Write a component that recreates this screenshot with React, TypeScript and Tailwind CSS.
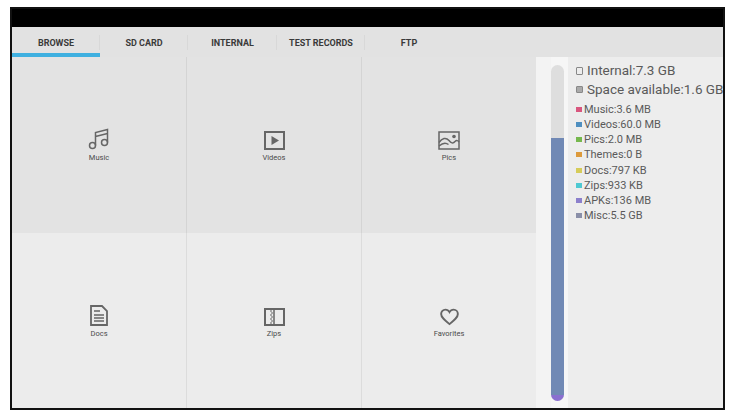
import React from "react";

const tabs = [
  { label: "BROWSE", w: "w-[88px]", active: true, sep: true },
  { label: "SD CARD", w: "w-[88px]", sep: true },
  { label: "INTERNAL", w: "w-[89px]", sep: true },
  { label: "TEST RECORDS", w: "w-[88px]", sep: true },
  { label: "FTP", w: "w-[88px]" },
];

const stroke = { fill: "none", stroke: "#666", strokeWidth: 1.5 };

const MusicIcon = () => (
  <svg width="22" height="22" viewBox="0 0 22 22" {...stroke}>
    <circle cx="4.5" cy="17.5" r="3" />
    <circle cx="16.5" cy="14.5" r="3" />
    <path d="M7.5 17.5V4.5L19.5 1.5V14.5M7.5 8.5L19.5 5.5" />
  </svg>
);
const VideoIcon = () => (
  <svg width="21" height="19" viewBox="0 0 21 19" {...stroke}>
    <rect x="1" y="1" width="19" height="17" strokeWidth="2" />
    <path d="M7.5 5L15 9.5L7.5 14Z" fill="#666" stroke="none" />
  </svg>
);
const PicIcon = () => (
  <svg width="22" height="19" viewBox="0 0 22 19" {...stroke}>
    <rect x="1" y="1" width="20" height="17" />
    <circle cx="16" cy="5.5" r="1.8" fill="#666" stroke="none" />
    <path d="M1 11.5C4 7 8 6 11 9.5C13 12 15 13 17 10.5C18.5 9 20 9.5 21 11M1 15C5 11.5 8 11.5 10.5 13.5" />
  </svg>
);
const DocIcon = () => (
  <svg width="18" height="21" viewBox="0 0 18 21" {...stroke}>
    <path d="M1 1H12L17 6V20H1Z" strokeWidth="1.8" />
    <path d="M4 6H10M4 10H14M4 13H14M4 16H14" />
  </svg>
);
const ZipIcon = () => (
  <svg width="21" height="18" viewBox="0 0 21 18" {...stroke}>
    <rect x="1" y="1" width="19" height="16" strokeWidth="2" />
    <path d="M10 1V17" />
    <path d="M6 3H8M7 5H9M6 7H8M7 9H9M6 11H8M7 13H9M6 15H8" strokeWidth="1.1" />
  </svg>
);
const HeartIcon = () => (
  <svg width="19" height="18" viewBox="0 0 20 18" {...stroke}>
    <path
      d="M10 16.5C4.5 12 1.2 9.2 1.2 5.8C1.2 3.2 3.2 1.2 5.7 1.2C7.4 1.2 9.1 2.2 10 3.8C10.9 2.2 12.6 1.2 14.3 1.2C16.8 1.2 18.8 3.2 18.8 5.8C18.8 9.2 15.5 12 10 16.5Z"
      strokeWidth="2"
    />
  </svg>
);

const Cell = ({
  icon,
  label,
  className,
}: {
  icon: React.ReactNode;
  label: string;
  className: string;
}) => (
  <div className={`flex flex-col items-center justify-center ${className}`}>
    <div className="flex h-[22px] items-end justify-center">{icon}</div>
    <div className="mt-[3px] text-[7.5px] leading-[9px] font-normal text-[#4a4a4a]">{label}</div>
  </div>
);

const stats = [
  ["Music:3.6 MB", "bg-[#d9577f]"],
  ["Videos:60.0 MB", "bg-[#4f8fc0]"],
  ["Pics:2.0 MB", "bg-[#76b84e]"],
  ["Themes:0 B", "bg-[#dd9a3c]"],
  ["Docs:797 KB", "bg-[#d6cc5a]"],
  ["Zips:933 KB", "bg-[#4fc9d2]"],
  ["APKs:136 MB", "bg-[#8c80cc]"],
  ["Misc:5.5 GB", "bg-[#8a8fa8]"],
];

export default function App() {
  return (
    <div className="h-[419px] w-[729px] overflow-hidden bg-white pt-[7px] pl-[10px] font-['Roboto',sans-serif]">
      <div className="flex h-[403px] w-[715px] flex-col overflow-hidden border-2 border-[#111] bg-[#ebebeb]">
        <div className="h-[18px] shrink-0 bg-black" />
        <div className="flex h-[30px] shrink-0 bg-[#e2e2e2]">
          {tabs.map((t) => (
            <div
              key={t.label}
              className={`relative flex h-full items-center justify-center pt-[3px] text-[9px] font-bold whitespace-nowrap text-[#3a3a3a] ${t.w}`}
            >
              {t.label}
              {t.sep && <span className="absolute top-[8px] right-0 h-[15px] w-px bg-[#d8d8d8]" />}
              {t.active && <span className="absolute right-0 bottom-0 left-0 h-[4px] bg-[#3fb0e0]" />}
            </div>
          ))}
        </div>
        <div className="flex min-h-0 flex-1">
          <div className="grid w-[524px] shrink-0 grid-cols-[174px_175px_175px] grid-rows-[176px_1fr]">
            <Cell icon={<MusicIcon />} label="Music" className="bg-[#e3e3e3]" />
            <Cell icon={<VideoIcon />} label="Videos" className="border-l border-[#d4d4d4] bg-[#e3e3e3]" />
            <Cell icon={<PicIcon />} label="Pics" className="border-l border-[#d4d4d4] bg-[#e3e3e3]" />
            <Cell icon={<DocIcon />} label="Docs" className="bg-[#ececec]" />
            <Cell icon={<ZipIcon />} label="Zips" className="border-l border-[#dcdcdc] bg-[#ececec]" />
            <Cell icon={<HeartIcon />} label="Favorites" className="border-l border-[#dcdcdc] bg-[#ececec]" />
          </div>
          <div className="flex min-w-0 flex-1 bg-[#ededed]">
            <div className="w-[15px] shrink-0 bg-[#f3f3f3]" />
            <div className="w-[17px] shrink-0 bg-[#f6f6f6] pt-[8px] pr-[4px]">
              <div className="flex h-[336px] w-[13px] flex-col overflow-hidden rounded-full bg-[#dedede]">
                <div className="h-[73px] shrink-0" />
                <div className="flex-1 bg-[#7189b5]" />
                <div className="h-[6px] shrink-0 bg-[#8a6fd0]" />
              </div>
            </div>
            <div className="min-w-0 flex-1 whitespace-nowrap pt-[5px] pl-[8px] text-[#5a5a5a]">
              <div className="flex h-[17px] items-center gap-[4px] text-[13.5px] leading-none">
                <span className="h-[8px] w-[7px] shrink-0 rounded-[1px] border border-[#888]" />
                <span>Internal:7.3 GB</span>
              </div>
              <div className="mt-[1px] flex h-[19px] items-center gap-[4px] text-[13.5px] leading-none">
                <span className="h-[7px] w-[7px] shrink-0 rounded-[1px] border border-[#888] bg-[#aaa]" />
                <span>Space available:1.6 GB</span>
              </div>
              <div className="mt-[3px] flex flex-col">
                {stats.map(([text, color]) => (
                  <div key={text} className="flex h-[15.14px] items-center gap-[2px] text-[11px] leading-none">
                    <span className={`h-[5px] w-[6px] shrink-0 ${color}`} />
                    <span>{text}</span>
                  </div>
                ))}
              </div>
            </div>
          </div>
        </div>
      </div>
    </div>
  );
}
